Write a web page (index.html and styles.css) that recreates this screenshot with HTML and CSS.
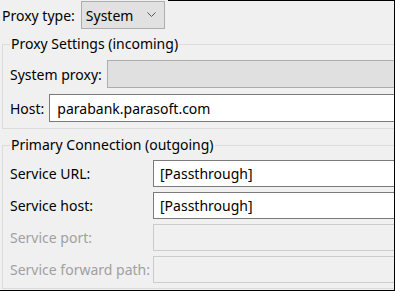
FILE: index.html
```html
<!DOCTYPE html>
<html lang="en">
<head>
  <meta charset="UTF-8">
  <title>Proxy settings</title>
  <link rel="stylesheet" href="styles.css">
</head>
<body>
  <div class="window">
    <!-- Proxy type selector -->
    <div class="top-row">
      <span class="label">Proxy type:</span>
      <div class="combo">
        <span>System</span>
        <svg class="chevron" width="9" height="6" viewBox="0 0 9 6">
          <path d="M0.5 0.5 L4.5 4.5 L8.5 0.5" fill="none" stroke="#5a5a5a" stroke-width="1"/>
        </svg>
      </div>
    </div>

    <!-- Incoming proxy -->
    <fieldset class="group group-in">
      <legend>Proxy Settings (incoming)</legend>
      <div class="row">
        <span class="label">System proxy:</span>
        <div class="field readonly"></div>
      </div>
      <div class="row">
        <span class="label">Host:</span>
        <div class="field">parabank.parasoft.com</div>
      </div>
    </fieldset>

    <!-- Outgoing connection -->
    <fieldset class="group group-out">
      <legend>Primary Connection (outgoing)</legend>
      <div class="grid">
        <span class="label">Service URL:</span>
        <div class="field">[Passthrough]</div>
        <span class="label">Service host:</span>
        <div class="field">[Passthrough]</div>
        <span class="label disabled">Service port:</span>
        <div class="field off"></div>
        <span class="label disabled">Service forward path:</span>
        <div class="field off"></div>
      </div>
    </fieldset>
  </div>
</body>
</html>
```

FILE: styles.css
```css
/* Base */
body {
  margin: 0;
  font-family: 'Noto Sans', 'Liberation Sans', sans-serif;
  font-size: 14px;
  color: #000;
  background: #f0f0f0;
}

.window {
  position: relative;
  width: 395px;
  height: 291px;
  box-sizing: border-box;
  border-right: 1px solid #000;
  border-bottom: 1px solid #000;
  background: #f0f0f0;
  overflow: hidden;
}

/* thin black edge along the top, right of the combo */
.window::before {
  content: '';
  position: absolute;
  top: 0;
  left: 168px;
  right: 0;
  height: 1px;
  background: #000;
}

.label {
  white-space: nowrap;
}

.label.disabled {
  color: #a0a0a0;
}

/* Top row */
.top-row {
  display: flex;
  align-items: center;
  gap: 6px;
  padding: 1px 0 0 2px;
}

.combo {
  width: 84px;
  height: 28px;
  box-sizing: border-box;
  display: flex;
  align-items: center;
  justify-content: space-between;
  padding: 0 8px 0 4px;
  background: #e1e1e1;
  border: 1px solid #adadad;
}

.chevron {
  display: block;
}

/* Group boxes */
.group {
  margin: 0 -30px 0 2px;
  border: 1px solid #dcdcdc;
  padding: 7px 0 6px 7px;
  min-width: 0;
}

.group legend {
  padding: 0 1px;
  line-height: 18px;
}

.group-in {
  margin-top: 6px;
}

.group-out {
  margin-top: 7px;
  padding-top: 6px;
  padding-bottom: 5px;
}

.row {
  display: flex;
  align-items: center;
  gap: 5px;
}

.row + .row {
  margin-top: 6px;
}

.grid {
  display: grid;
  grid-template-columns: 143px 1fr;
  row-gap: 5px;
  align-items: center;
}

/* Text fields */
.field {
  flex: 1;
  height: 28px;
  box-sizing: border-box;
  display: flex;
  align-items: center;
  padding-left: 7px;
  background: #fff;
  border: 1px solid #7a7a7a;
  white-space: nowrap;
}

.field.readonly {
  background: #e0e0e0;
  border-color: #adadad;
}

.grid .field {
  height: 27px;
  padding-left: 6px;
}

.field.off {
  background: #f0f0f0;
  border-color: #cccccc;
}
```
